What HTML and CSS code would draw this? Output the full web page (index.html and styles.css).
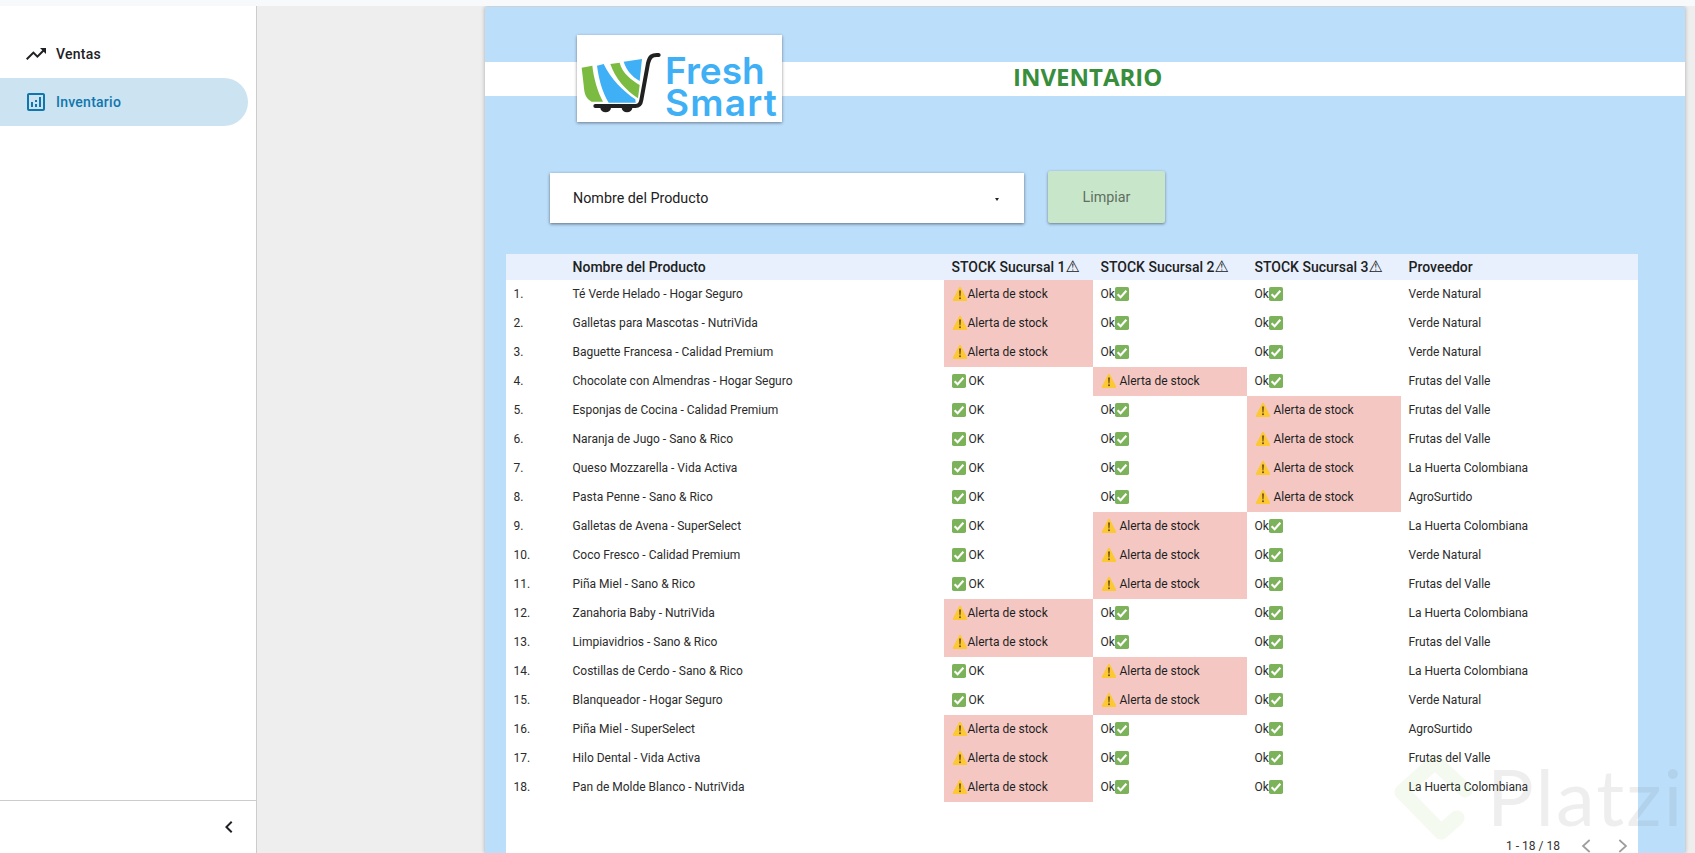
FILE: index.html
```html
<!DOCTYPE html>
<html lang="es">
<head>
<meta charset="utf-8">
<title>Inventario</title>
<link rel="stylesheet" href="styles.css">
</head>
<body>
<svg class="defs" width="0" height="0" aria-hidden="true">
  <symbol id="warn" viewBox="0 0 16 16">
    <path d="M8 .8c.4 0 .8.3 1.100.9l5.900 11.500c.5 1 0 1.800-1 1.800H2c-1 0-1.500-.8-1-1.800L6.900 1.700C7.200 1.100 7.600.8 8 .8z" fill="#fcc934"/>
    <path d="M7.100 4.500h1.800l-.4 6h-1z" fill="#6b4a12"/>
    <circle cx="8" cy="12.300" r="1" fill="#6b4a12"/>
  </symbol>
  <symbol id="check" viewBox="0 0 16 16">
    <rect x="0" y="0" width="16" height="16" rx="2" fill="#7cb35a"/>
    <path d="M3 8.300l3.400 3.400 6.600-7.400" fill="none" stroke="#fff" stroke-width="2.400"/>
  </symbol>
</svg>
<div class="topbar"></div>
<div class="app">
  <aside class="sidebar">
    <nav class="nav">
      <a class="nav-item">
        <svg class="nav-icon" viewBox="0 0 24 24"><path d="M16 6l2.290 2.290-4.880 4.880-4-4L2 16.590 3.410 18l6-6 4 4 6.300-6.290L22 12V6z" fill="currentColor"/></svg>
        <span>Ventas</span>
      </a>
      <a class="nav-item active">
        <svg class="nav-icon" viewBox="0 0 24 24"><path d="M19 3H5c-1.100 0-2 .9-2 2v14c0 1.100.9 2 2 2h14c1.100 0 2-.9 2-2V5c0-1.100-.9-2-2-2zm0 16H5V5h14v14zM7 12h2v5H7zm8-5h2v10h-2zm-4 7h2v3h-2zm0-4h2v2h-2z" fill="currentColor"/></svg>
        <span>Inventario</span>
      </a>
    </nav>
    <div class="side-foot">
      <svg class="collapse" viewBox="0 0 24 24"><path d="M15.410 7.410L14 6l-6 6 6 6 1.410-1.410L10.830 12z" fill="#202124"/></svg>
    </div>
  </aside>
  <main class="content">
    <section class="canvas">
      <div class="band">
        <div class="logo">
          <svg class="cart" viewBox="0 0 264 261">
            <path d="M14 98L46 92C50 130 62 170 78 200L44 200C28 192 22 180 20 150Z" fill="#7cbb42"/>
            <path d="M60 92L80 87C100 130 140 170 175 193L176 203L95 203C75 170 65 130 60 92Z" fill="#3fb0f5"/>
            <path d="M100 87L128 83C135 115 165 135 188 150L183 190C145 165 115 130 100 87Z" fill="#7cbb42"/>
            <path d="M140 80L195 72L188 138C165 125 148 105 140 80Z" fill="#3fb0f5"/>
            <path d="M245 60C225 58 218 65 213 85L193 195C191 209 185 213 175 213L55 213" fill="none" stroke="#212121" stroke-width="12" stroke-linecap="round"/>
            <path d="M70 218h32a16 14 0 0 1-32 0zM134 218h32a16 14 0 0 1-32 0z" fill="#212121"/>
          </svg>
          <div class="logo-text">Fresh<br><span class="logo-smart">Smart</span></div>
        </div>
        <h1 class="title">INVENTARIO</h1>
      </div>
      <div class="toolbar">
        <div class="select">
          <span>Nombre del Producto</span>
          <i class="caret"></i>
        </div>
        <button class="btn" type="button">Limpiar</button>
      </div>
      <div class="panel">
        <table class="grid">
          <colgroup>
            <col class="c-num"><col class="c-name"><col class="c-s1"><col class="c-s2"><col class="c-s3"><col>
          </colgroup>
          <thead>
            <tr><th></th><th>Nombre del Producto</th><th>STOCK Sucursal 1<span class="sym">⚠</span></th><th>STOCK Sucursal 2<span class="sym">⚠</span></th><th>STOCK Sucursal 3<span class="sym">⚠</span></th><th>Proveedor</th></tr>
          </thead>
          <tbody>
            <tr><td>1.</td><td>Té Verde Helado - Hogar Seguro</td><td class="al"><svg class="em-w"><use href="#warn"/></svg>Alerta de stock</td><td>Ok<svg class="em"><use href="#check"/></svg></td><td>Ok<svg class="em"><use href="#check"/></svg></td><td>Verde Natural</td></tr>
            <tr><td>2.</td><td>Galletas para Mascotas - NutriVida</td><td class="al"><svg class="em-w"><use href="#warn"/></svg>Alerta de stock</td><td>Ok<svg class="em"><use href="#check"/></svg></td><td>Ok<svg class="em"><use href="#check"/></svg></td><td>Verde Natural</td></tr>
            <tr><td>3.</td><td>Baguette Francesa - Calidad Premium</td><td class="al"><svg class="em-w"><use href="#warn"/></svg>Alerta de stock</td><td>Ok<svg class="em"><use href="#check"/></svg></td><td>Ok<svg class="em"><use href="#check"/></svg></td><td>Verde Natural</td></tr>
            <tr><td>4.</td><td>Chocolate con Almendras - Hogar Seguro</td><td><svg class="em"><use href="#check"/></svg> OK</td><td class="al"><svg class="em-w"><use href="#warn"/></svg> Alerta de stock</td><td>Ok<svg class="em"><use href="#check"/></svg></td><td>Frutas del Valle</td></tr>
            <tr><td>5.</td><td>Esponjas de Cocina - Calidad Premium</td><td><svg class="em"><use href="#check"/></svg> OK</td><td>Ok<svg class="em"><use href="#check"/></svg></td><td class="al"><svg class="em-w"><use href="#warn"/></svg> Alerta de stock</td><td>Frutas del Valle</td></tr>
            <tr><td>6.</td><td>Naranja de Jugo - Sano &amp; Rico</td><td><svg class="em"><use href="#check"/></svg> OK</td><td>Ok<svg class="em"><use href="#check"/></svg></td><td class="al"><svg class="em-w"><use href="#warn"/></svg> Alerta de stock</td><td>Frutas del Valle</td></tr>
            <tr><td>7.</td><td>Queso Mozzarella - Vida Activa</td><td><svg class="em"><use href="#check"/></svg> OK</td><td>Ok<svg class="em"><use href="#check"/></svg></td><td class="al"><svg class="em-w"><use href="#warn"/></svg> Alerta de stock</td><td>La Huerta Colombiana</td></tr>
            <tr><td>8.</td><td>Pasta Penne - Sano &amp; Rico</td><td><svg class="em"><use href="#check"/></svg> OK</td><td>Ok<svg class="em"><use href="#check"/></svg></td><td class="al"><svg class="em-w"><use href="#warn"/></svg> Alerta de stock</td><td>AgroSurtido</td></tr>
            <tr><td>9.</td><td>Galletas de Avena - SuperSelect</td><td><svg class="em"><use href="#check"/></svg> OK</td><td class="al"><svg class="em-w"><use href="#warn"/></svg> Alerta de stock</td><td>Ok<svg class="em"><use href="#check"/></svg></td><td>La Huerta Colombiana</td></tr>
            <tr><td>10.</td><td>Coco Fresco - Calidad Premium</td><td><svg class="em"><use href="#check"/></svg> OK</td><td class="al"><svg class="em-w"><use href="#warn"/></svg> Alerta de stock</td><td>Ok<svg class="em"><use href="#check"/></svg></td><td>Verde Natural</td></tr>
            <tr><td>11.</td><td>Piña Miel - Sano &amp; Rico</td><td><svg class="em"><use href="#check"/></svg> OK</td><td class="al"><svg class="em-w"><use href="#warn"/></svg> Alerta de stock</td><td>Ok<svg class="em"><use href="#check"/></svg></td><td>Frutas del Valle</td></tr>
            <tr><td>12.</td><td>Zanahoria Baby - NutriVida</td><td class="al"><svg class="em-w"><use href="#warn"/></svg>Alerta de stock</td><td>Ok<svg class="em"><use href="#check"/></svg></td><td>Ok<svg class="em"><use href="#check"/></svg></td><td>La Huerta Colombiana</td></tr>
            <tr><td>13.</td><td>Limpiavidrios - Sano &amp; Rico</td><td class="al"><svg class="em-w"><use href="#warn"/></svg>Alerta de stock</td><td>Ok<svg class="em"><use href="#check"/></svg></td><td>Ok<svg class="em"><use href="#check"/></svg></td><td>Frutas del Valle</td></tr>
            <tr><td>14.</td><td>Costillas de Cerdo - Sano &amp; Rico</td><td><svg class="em"><use href="#check"/></svg> OK</td><td class="al"><svg class="em-w"><use href="#warn"/></svg> Alerta de stock</td><td>Ok<svg class="em"><use href="#check"/></svg></td><td>La Huerta Colombiana</td></tr>
            <tr><td>15.</td><td>Blanqueador - Hogar Seguro</td><td><svg class="em"><use href="#check"/></svg> OK</td><td class="al"><svg class="em-w"><use href="#warn"/></svg> Alerta de stock</td><td>Ok<svg class="em"><use href="#check"/></svg></td><td>Verde Natural</td></tr>
            <tr><td>16.</td><td>Piña Miel - SuperSelect</td><td class="al"><svg class="em-w"><use href="#warn"/></svg>Alerta de stock</td><td>Ok<svg class="em"><use href="#check"/></svg></td><td>Ok<svg class="em"><use href="#check"/></svg></td><td>AgroSurtido</td></tr>
            <tr><td>17.</td><td>Hilo Dental - Vida Activa</td><td class="al"><svg class="em-w"><use href="#warn"/></svg>Alerta de stock</td><td>Ok<svg class="em"><use href="#check"/></svg></td><td>Ok<svg class="em"><use href="#check"/></svg></td><td>Frutas del Valle</td></tr>
            <tr><td>18.</td><td>Pan de Molde Blanco - NutriVida</td><td class="al"><svg class="em-w"><use href="#warn"/></svg>Alerta de stock</td><td>Ok<svg class="em"><use href="#check"/></svg></td><td>Ok<svg class="em"><use href="#check"/></svg></td><td>La Huerta Colombiana</td></tr>
          </tbody>
        </table>
        <div class="pager">
          <span>1 - 18 / 18</span>
          <svg class="pg" viewBox="0 0 12 12"><path d="M8 1.500L3 6l5 4.500" fill="none" stroke="#9e9e9e" stroke-width="1.300"/></svg>
          <svg class="pg" viewBox="0 0 12 12"><path d="M4 1.500L9 6l-5 4.500" fill="none" stroke="#9e9e9e" stroke-width="1.300"/></svg>
        </div>
      </div>
    </section>
    <div class="watermark" aria-hidden="true">
      <svg class="wm-logo" viewBox="0 0 88 88"><path d="M64 66L48 80 9 40 42 10 72 38" fill="none" stroke="#8bc34a" stroke-width="15" stroke-linejoin="round" stroke-linecap="round"/></svg>
      <span class="wm-text">Platzi</span>
    </div>
  </main>
</div>
</body>
</html>
```
FILE: styles.css
```css
* { box-sizing: border-box; }
html, body { height: 100%; }
body {
  margin: 0;
  overflow: hidden;
  display: flex;
  flex-direction: column;
  font-family: Roboto, "Liberation Sans", sans-serif;
  color: #202124;
  background: #fff;
}
.defs { position: absolute; }
.topbar { height: 6px; flex: none; background: #f8f9fb; }
.app { flex: 1; display: flex; min-height: 0; }

.sidebar {
  width: 257px;
  flex: none;
  display: flex;
  flex-direction: column;
  background: #fff;
  border-right: 1px solid #ccc;
}
.nav { flex: 1; padding: 24px 8px 0 0; }
.nav-item {
  height: 48px;
  padding-left: 24px;
  display: flex;
  align-items: center;
  gap: 8px;
  font-size: 14px;
  font-weight: 500;
  letter-spacing: .25px;
  color: #202124;
  border-radius: 0 24px 24px 0;
}
.nav-item.active { background: #cce3f1; color: #0f76ae; }
.nav-icon { width: 24px; height: 24px; flex: none; }
.side-foot {
  height: 53px;
  flex: none;
  border-top: 1px solid #ccc;
  display: flex;
  align-items: center;
  justify-content: flex-end;
  padding-right: 15px;
}
.collapse { width: 24px; height: 24px; }

.content {
  flex: 1;
  min-width: 0;
  position: relative;
  background: #eee;
  padding: 1px 10px 0 228px;
  overflow: hidden;
}
.canvas {
  height: 100%;
  padding-top: 55px;
  background: #bbdefb;
  box-shadow: 0 0 4px rgba(0,0,0,.3);
}
.band {
  position: relative;
  height: 34px;
  background: #fff;
  padding-left: 528px;
}
.title {
  margin: 0;
  font: 700 24px/30px "Open Sans", sans-serif;
  color: #388e3c;
}
.logo {
  position: absolute;
  left: 92px;
  top: -27px;
  width: 205px;
  height: 87px;
  background: #fff;
  box-shadow: 0 1px 3px rgba(0,0,0,.45);
  display: flex;
  align-items: flex-start;
}
.cart { width: 88px; height: 87px; flex: none; }
.logo-text {
  font: 600 37px/32px Inter, sans-serif;
  color: #3fb0f5;
  margin-top: 20px;
  white-space: nowrap;
}
.logo-smart { letter-spacing: 1.200px; }

.toolbar {
  display: flex;
  align-items: flex-end;
  gap: 24px;
  margin-top: 75px;
  padding-left: 65px;
}
.select {
  width: 474px;
  height: 50px;
  background: #fff;
  box-shadow: 0 1px 3px rgba(0,0,0,.5);
  display: flex;
  align-items: center;
  justify-content: space-between;
  padding: 0 25px 0 23px;
  font-size: 14.300px;
  color: #212121;
}
.caret {
  width: 0;
  height: 0;
  border-style: solid;
  border-width: 3px 2.500px 0;
  border-color: #202124 transparent transparent;
  margin-top: 2px;
}
.btn {
  width: 117px;
  height: 52px;
  border: 0;
  border-radius: 2px;
  background: #c8e6c9;
  box-shadow: 0 1px 3px rgba(0,0,0,.45);
  font: 400 14.300px Roboto, sans-serif;
  color: #5f6f62;
}

.panel {
  width: 1132px;
  margin: 31px 0 0 21px;
  height: 600px;
  background: #fff;
  display: flex;
  flex-direction: column;
}
.grid {
  width: 100%;
  table-layout: fixed;
  border-collapse: collapse;
  font-size: 12px;
  color: #333;
}
.c-num { width: 59px; }
.c-name { width: 379px; }
.c-s1 { width: 149px; }
.c-s2 { width: 154px; }
.c-s3 { width: 154px; }
.grid th {
  height: 26px;
  padding: 0 0 0 7.500px;
  background: #e8f0fe;
  text-align: left;
  font-size: 14px;
  font-weight: 500;
  color: #212121;
  white-space: nowrap;
}
.grid td {
  height: 29px;
  padding: 0 0 2px 7.500px;
  white-space: nowrap;
  overflow: hidden;
  color: #2b2b2b;
}
.grid td.al { background: #f4c7c3; color: #1f1f1f; }
.sym { font: 400 16px/1 "DejaVu Sans", sans-serif; color: #212121; }
.em { width: 14px; height: 14px; vertical-align: -3px; }
.em-w { width: 16px; height: 16px; vertical-align: -4px; }
.pager {
  margin-top: 36px;
  display: flex;
  align-items: center;
  justify-content: flex-end;
  gap: 19px;
  padding-right: 8px;
  font-size: 12px;
  color: #333;
}
.pg { width: 16px; height: 16px; }

.watermark {
  position: absolute;
  left: 1136px;
  top: 745px;
  display: flex;
  align-items: center;
  gap: 6px;
  pointer-events: none;
}
.wm-logo { width: 88px; height: 88px; opacity: .08; }
.wm-text {
  font: 400 78px/90px Lato, sans-serif;
  letter-spacing: 2px;
  color: rgba(120,120,120,.13);
}
```
